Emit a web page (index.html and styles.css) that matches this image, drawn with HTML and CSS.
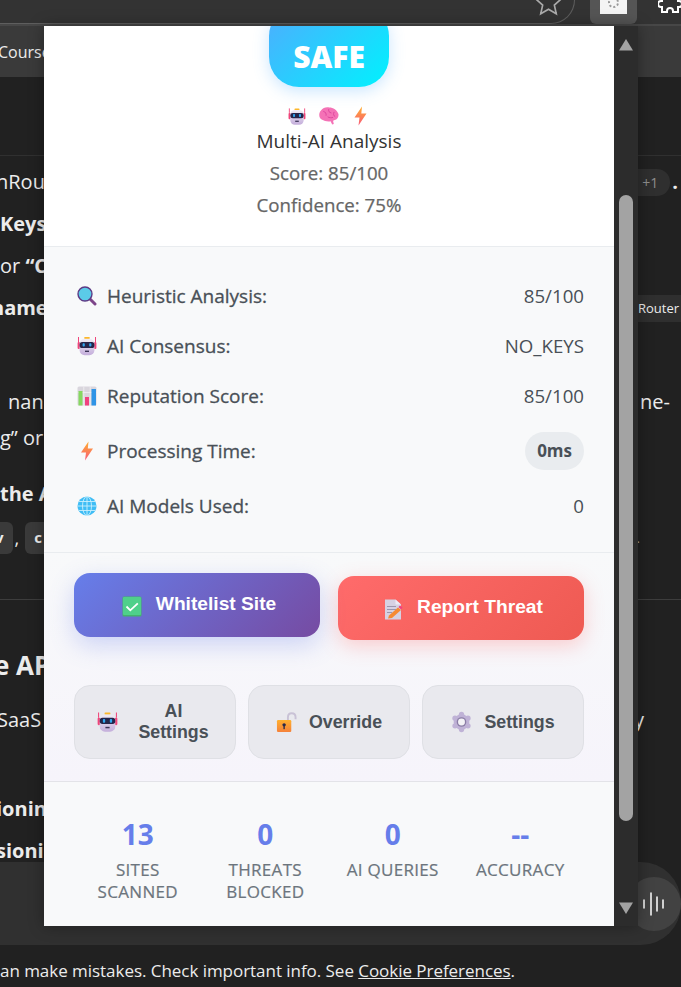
FILE: index.html
```html
<!DOCTYPE html>
<html lang="en">
<head>
    <meta charset="UTF-8">
    <meta name="viewport" content="width=device-width, initial-scale=1.0">
    <title>Multi-AI Analysis</title>
    <link rel="stylesheet" href="styles.css">
</head>
<body>
    <!-- shared icons -->
    <svg class="sprite" xmlns="http://www.w3.org/2000/svg">
        <defs>
            <linearGradient id="boltFill" x1="0" y1="0" x2="0" y2="1">
                <stop offset="0" stop-color="#ffb02e"/>
                <stop offset="1" stop-color="#f8587a"/>
            </linearGradient>
            <linearGradient id="botFill" x1="0" y1="0" x2="0" y2="1">
                <stop offset="0" stop-color="#f1edf6"/>
                <stop offset="1" stop-color="#c4aedb"/>
            </linearGradient>
            <linearGradient id="lockFill" x1="0" y1="0" x2="0" y2="1">
                <stop offset="0" stop-color="#ffb02e"/>
                <stop offset="1" stop-color="#f5813a"/>
            </linearGradient>
            <symbol id="i-bot" viewBox="0 0 20 20">
                <path d="M1.500 1v5M18.500 1v5" stroke="#f0457a" stroke-width="1"/>
                <rect x="0.600" y="6" width="2.400" height="7" rx="1" fill="#f0457a"/>
                <rect x="17" y="6" width="2.400" height="7" rx="1" fill="#f0457a"/>
                <rect x="7.200" y="1" width="5.600" height="2" rx=".8" fill="#fcb82c"/>
                <rect x="2.600" y="2.800" width="14.800" height="16.400" rx="5" fill="url(#botFill)"/>
                <rect x="2.600" y="6" width="14.800" height="6" rx="2.600" fill="#26254a"/>
                <rect x="5.600" y="7.200" width="2.200" height="3.400" rx=".8" fill="#31a8f0"/>
                <rect x="12.200" y="7.200" width="2.200" height="3.400" rx=".8" fill="#31a8f0"/>
                <rect x="8" y="14.600" width="4" height="1.400" fill="#3b3356"/>
            </symbol>
            <symbol id="i-brain" viewBox="1 1.500 18.500 16.500" preserveAspectRatio="none">
                <path d="M3 4.500C4.500 2.400 7.500 1.400 10.500 2c3.500 0 7.500 2.500 8.500 6 .4 2.500-1 5-3.500 5.500l-1.500.7.700 2.800-1.500.5-1.500-3C9.500 15 6 14.500 3.500 13 1 11.500.2 7.500 3 4.500z" fill="#f472b6"/>
                <path d="M5 5.500c2 .5 3 2 2.500 4M10 3.500c-.5 2 .5 3 2.500 3.500M15 6c-1 2-.5 3.500 1 4.500M9 10.500c1.500 1 3.500 1 5 .5" stroke="#d9409b" stroke-width=".8" fill="none"/>
            </symbol>
            <symbol id="i-bolt" viewBox="3.500 0 13 20">
                <path d="M11.500 0.500 4 11.500h5L8 19.500l8-12h-5.200z" fill="url(#boltFill)"/>
            </symbol>
            <symbol id="i-search" viewBox="0 0 20 20">
                <path d="M12.500 12.500l5.500 5.500" stroke="#7d4589" stroke-width="3" stroke-linecap="round"/>
                <circle cx="8" cy="8" r="7" fill="#5bcbe8" stroke="#5c3a85" stroke-width="1.400"/>
            </symbol>
            <symbol id="i-chart" viewBox="0 0 20 20">
                <rect x=".5" y=".5" width="19" height="19" rx="1.500" fill="#d9d6dd"/>
                <path d="M6.800.5v19M13.200.5v19M.5 6.500h19" stroke="#f1f0f3" stroke-width=".8"/>
                <rect x="1.500" y="5" width="4" height="14.500" fill="#86d861"/>
                <rect x="8" y="11" width="4" height="8.500" fill="#f0417f"/>
                <rect x="14.500" y="3" width="4.500" height="16.500" fill="#2f94e6"/>
            </symbol>
            <symbol id="i-globe" viewBox="0 0 20 20">
                <circle cx="10" cy="10" r="9.500" fill="#3fbdf5"/>
                <g stroke="#c9effd" stroke-width=".9" fill="none">
                    <ellipse cx="10" cy="10" rx="4.500" ry="9.500"/>
                    <path d="M10 .5v19M.5 10h19M2 5.500h16M2 14.500h16"/>
                </g>
            </symbol>
            <symbol id="i-check" viewBox="0 0 20 21">
                <rect x=".5" y=".5" width="19" height="20" rx="1.500" fill="#43b36d"/>
                <rect x="1" y="1" width="18" height="18" rx="1" fill="#4fd08a"/>
                <path d="M4.500 10.500l3.800 3.800 7.500-7" stroke="#fff" stroke-width="1.800" fill="none"/>
            </symbol>
            <symbol id="i-memo" viewBox="0 0 20 20">
                <path d="M2 0h10.500L18 5v15H2z" fill="#d6d1e2"/>
                <path d="M12.500 0v5H18z" fill="#eeeaf4"/>
                <path d="M4 7h9M4 10h9M4 13h5" stroke="#9c96ad" stroke-width="1"/>
                <path d="M5 19l1-3 9-8 3 2.500-9 8z" fill="#f68a32"/>
                <path d="M15.500 7.500l1.500-1.500 2.500 2-1.500 2z" fill="#f0417f"/>
            </symbol>
            <symbol id="i-lock" viewBox="0 0 22 22">
                <path d="M12.500 9V6c0-5.500 8-5.500 8 0v2" stroke="#c9c2d6" stroke-width="2" fill="none"/>
                <rect x="1" y="9" width="15" height="12.500" rx="1.200" fill="url(#lockFill)"/>
                <circle cx="8.500" cy="14" r="1.800" fill="#2a2a4a"/>
                <rect x="7.800" y="14" width="1.400" height="4.500" fill="#2a2a4a"/>
            </symbol>
            <symbol id="i-gear" viewBox="0 0 20 20">
                <g fill="#bfb2d6">
                    <circle cx="10" cy="10" r="7.500"/>
                    <circle cx="10" cy="2.800" r="2.500"/>
                    <circle cx="10" cy="17.200" r="2.500"/>
                    <circle cx="3.800" cy="6.400" r="2.500"/>
                    <circle cx="16.200" cy="6.400" r="2.500"/>
                    <circle cx="3.800" cy="13.600" r="2.500"/>
                    <circle cx="16.200" cy="13.600" r="2.500"/>
                </g>
                <circle cx="10" cy="10" r="4.600" fill="#8b7ea6"/>
                <circle cx="10" cy="10" r="3.300" fill="#f3f2f6"/>
            </symbol>
        </defs>
    </svg>

    <header class="topbar">
        <div class="address">
            <svg class="star" viewBox="0 0 24 24"><path d="M12 1l3.300 7.300 7.700.8-5.800 5.200 1.700 7.700L12 18l-6.900 4 1.700-7.700L1 9.100l7.700-.8z"/></svg>
        </div>
        <div class="ext-tile"><span class="ext-icon"><span class="ext-ring"></span></span></div>
        <svg class="puzzle" viewBox="0 0 24 24"><path d="M9 3a3 3 0 0 1 6 0v1h5v5h1a3 3 0 0 1 0 6h-1v5h-5v-1a3 3 0 0 0-6 0v1H4v-5H3a3 3 0 0 1 0-6h1V4h5z"/></svg>
    </header>
    <nav class="tabs"><span class="tab">Course</span></nav>

    <main class="chat">
        <div class="lines first">
            <div class="line"><span class="cut">nRou</span><span class="right-bit"><span class="chip-more">+1</span>.</span></div>
            <div class="line"><b>Keys</b></div>
            <div class="line"><span>or <b>“C</b></span></div>
            <div class="line"><b class="cut-s">name</b><span class="chip-router">nRouter</span></div>
        </div>
        <div class="lines second">
            <div class="line"><span class="indent">nan</span><span class="tail">ne-</span></div>
            <div class="line">g” or</div>
        </div>
        <div class="lines third">
            <div class="line"><b>the A</b></div>
            <div class="line code-row"><span class="code">v</span><span class="comma">,</span><span class="code">c</span><span class="dot">.</span></div>
        </div>
        <hr class="rule">
        <h2 class="heading">e AP</h2>
        <div class="line saas"><span>SaaS</span><span>y</span></div>
        <div class="lines fourth">
            <div class="line"><b class="cut">ionin</b></div>
            <div class="line"><b class="cut">sionin</b></div>
        </div>
    </main>

    <div class="composer">
        <div class="mic">
            <svg viewBox="0 0 24 24"><path d="M2 8v8M9 1v22M15 5v14M21 8v8"/></svg>
        </div>
    </div>
    <footer class="foot">an make mistakes. Check important info. See <a href="#">Cookie Preferences</a>.</footer>

    <!-- extension popup -->
    <div class="popup">
        <div class="panel">
            <section class="status">
                <div class="badge">SAFE</div>
                <div class="status-icons">
                    <svg class="ico-bot"><use href="#i-bot"/></svg>
                    <svg class="ico-brain"><use href="#i-brain"/></svg>
                    <svg class="ico-bolt"><use href="#i-bolt"/></svg>
                </div>
                <p class="status-title">Multi-AI Analysis</p>
                <p class="status-line">Score: 85/100</p>
                <p class="status-line">Confidence: 75%</p>
            </section>

            <section class="details">
                <div class="row">
                    <span class="row-label"><svg class="ico"><use href="#i-search"/></svg>Heuristic Analysis:</span>
                    <span class="row-value">85/100</span>
                </div>
                <div class="row">
                    <span class="row-label"><svg class="ico"><use href="#i-bot"/></svg>AI Consensus:</span>
                    <span class="row-value">NO_KEYS</span>
                </div>
                <div class="row">
                    <span class="row-label"><svg class="ico"><use href="#i-chart"/></svg>Reputation Score:</span>
                    <span class="row-value">85/100</span>
                </div>
                <div class="row tall">
                    <span class="row-label"><svg class="ico"><use href="#i-bolt"/></svg>Processing Time:</span>
                    <span class="pill">0ms</span>
                </div>
                <div class="row">
                    <span class="row-label"><svg class="ico"><use href="#i-globe"/></svg>AI Models Used:</span>
                    <span class="row-value">0</span>
                </div>
            </section>

            <section class="actions">
                <div class="main-actions">
                    <button class="btn btn-white"><svg class="btn-ico"><use href="#i-check"/></svg>Whitelist Site</button>
                    <button class="btn btn-report"><svg class="btn-ico"><use href="#i-memo"/></svg>Report Threat</button>
                </div>
                <div class="sub-actions">
                    <button class="sub"><svg class="sub-ico"><use href="#i-bot"/></svg><span class="sub-text narrow">AI Settings</span></button>
                    <button class="sub"><svg class="sub-ico"><use href="#i-lock"/></svg><span class="sub-text">Override</span></button>
                    <button class="sub"><svg class="sub-ico"><use href="#i-gear"/></svg><span class="sub-text">Settings</span></button>
                </div>
            </section>

            <section class="stats">
                <div class="stat"><div class="stat-num">13</div><div class="stat-label">Sites Scanned</div></div>
                <div class="stat"><div class="stat-num">0</div><div class="stat-label">Threats Blocked</div></div>
                <div class="stat"><div class="stat-num">0</div><div class="stat-label">AI Queries</div></div>
                <div class="stat"><div class="stat-num">--</div><div class="stat-label">Accuracy</div></div>
            </section>
        </div>
        <div class="scrollbar">
            <svg class="arrow" viewBox="0 0 16 14"><path d="M8 1l7 11.500H1z"/></svg>
            <div class="thumb"></div>
            <svg class="arrow" viewBox="0 0 16 14"><path d="M8 13L1 1.500h14z"/></svg>
        </div>
    </div>
</body>
</html>
```

FILE: styles.css
```css
*{
    box-sizing: border-box;
}
html, body{
    margin: 0;
    height: 987px;
    overflow: hidden;
}
body{
    font-family: "Open Sans", "Noto Sans", sans-serif;
    background-color: #212121;
    color: #ececec;
    display: flex;
    flex-direction: column;
}
p, h2{
    margin: 0;
}
button{
    cursor: pointer;
}
.sprite{
    display: block;
    width: 0;
    height: 0;
}

/* browser chrome behind the popup */
.topbar{
    height: 26px;
    flex: none;
    background-color: #333;
    border-bottom: 2px solid #474747;
    display: flex;
    overflow: hidden;
}
.address{
    width: 575px;
    height: 48px;
    margin-top: -24px;
    border: 1px solid #5e5e5e;
    border-left: 0;
    border-radius: 0 30px 30px 0;
    display: flex;
    justify-content: flex-end;
    align-items: center;
    padding-right: 12px;
    flex: none;
}
.star{
    width: 27px;
    height: 27px;
    margin-top: 4px;
    fill: none;
    stroke: #aaa;
    stroke-width: 1.5;
}
.ext-tile{
    width: 47px;
    height: 24px;
    margin-left: 15px;
    background-color: #555;
    border-radius: 0 0 6px 6px;
    display: flex;
    justify-content: center;
    flex: none;
}
.ext-icon{
    width: 27px;
    height: 14px;
    background-color: #f4f4f4;
    display: flex;
    justify-content: center;
}
.ext-ring{
    width: 11px;
    height: 11px;
    margin-top: -3px;
    border: 2px dotted #999;
    border-radius: 50%;
}
.puzzle{
    width: 24px;
    height: 24px;
    margin: -8px 0 0 21px;
    flex: none;
    fill: none;
    stroke: #fff;
    stroke-width: 2;
}
.tabs{
    height: 51px;
    flex: none;
    background-color: #3a3a3a;
    display: flex;
    align-items: center;
}
.tab{
    font-size: 16px;
    margin-left: -2px;
}

.chat{
    height: 785px;
    flex: none;
    overflow: hidden;
    font-size: 20px;
}
.lines{
    line-height: 42px;
}
.first{
    margin-top: 78px;
    padding-top: 5px;
    border-top: 1px solid #303030;
}
.second{
    margin-top: 55px;
}
.second .line{
    height: 36px;
    line-height: 36px;
}
.third{
    margin-top: 16px;
}
.third .line{
    height: 44px;
    line-height: 44px;
}
.fourth{
    margin-top: 48px;
}
.line{
    display: flex;
    justify-content: space-between;
    align-items: center;
    height: 42px;
    white-space: pre-wrap;
}
.line b{
    font-weight: 700;
}
.cut{
    margin-left: -4px;
}
.cut-s{
    margin-left: -9px;
}
.indent{
    margin-left: 8px;
}
.tail{
    padding-right: 11px;
}
.right-bit{
    display: flex;
    align-items: center;
    gap: 2px;
    padding-right: 3px;
    font-weight: 700;
}
.chip-more{
    width: 33px;
    height: 27px;
    line-height: 27px;
    font-size: 14px;
    font-weight: 400;
    color: #8e8e8e;
    background-color: #2f2f2f;
    border-radius: 0 13px 13px 0;
    padding-left: 5px;
}
.chip-router{
    font-size: 13px;
    line-height: 27px;
    background-color: #2f2f2f;
    padding: 0 2px 0 0;
    margin-left: auto;
}
.code-row{
    justify-content: flex-start;
}
.code{
    height: 32px;
    line-height: 30px;
    background-color: #3a3a3a;
    border-radius: 6px;
    font-size: 15px;
    font-weight: 700;
    padding: 0 9px;
}
.code:first-child{
    margin-left: -14px;
}
.comma{
    margin: 0 6px 0 2px;
    font-size: 18px;
}
.dot{
    margin-left: auto;
    margin-right: 41px;
    font-size: 13px;
    color: #aaa;
}
.rule{
    margin: 39px 0 0;
    border: 0;
    height: 1px;
    background-color: #3d3d3d;
}
.heading{
    margin-top: 44px;
    font-size: 26px;
    line-height: 42px;
    font-weight: 700;
    margin-left: -6px;
}
.saas{
    margin: 12px 0 0 -3px;
    padding-right: 37px;
}
.composer{
    height: 83px;
    flex: none;
    background-color: #303030;
    border-radius: 0 40px 40px 0;
    display: flex;
    justify-content: flex-end;
    align-items: center;
}
.mic{
    width: 54px;
    height: 54px;
    margin-right: 0;
    border-radius: 50%;
    background-color: #424242;
    display: flex;
    justify-content: center;
    align-items: center;
}
.mic svg{
    width: 24px;
    height: 24px;
    fill: none;
    stroke: #fff;
    stroke-width: 1.5;
    stroke-linecap: round;
}
.foot{
    height: 52px;
    line-height: 52px;
    font-size: 17px;
    letter-spacing: -.04px;
    white-space: nowrap;
    color: #ececec;
}
.foot a{
    color: inherit;
}

/* popup */
.popup{
    position: absolute;
    left: 44px;
    top: 26px;
    width: 594px;
    height: 900px;
    display: flex;
    box-shadow: 0 0 14px rgba(0, 0, 0, .35);
}
.panel{
    width: 570px;
    height: 900px;
    overflow: hidden;
    background-color: #fff;
}
.scrollbar{
    width: 24px;
    background-color: #2c2c2c;
    display: flex;
    flex-direction: column;
    align-items: center;
    padding-top: 12px;
}
.arrow{
    width: 16px;
    height: 14px;
    fill: #a3a3a3;
    flex: none;
}
.thumb{
    width: 14px;
    height: 626px;
    margin: 143px 0 80px;
    background-color: #a3a3a3;
    border-radius: 7px;
    flex: none;
}

.status{
    display: flow-root;
    height: 221px;
    text-align: center;
    border-bottom: 1px solid #e9ecef;
    background-color: #fff;
}
.badge{
    width: 120px;
    height: 81px;
    margin: -20px auto 0;
    padding-top: 20px;
    line-height: 61px;
    border-radius: 30px;
    font-size: 30px;
    font-weight: 800;
    color: #fff;
    background: linear-gradient(135deg, #4facfe 0%, #00f2fe 100%);
    box-shadow: 0 4px 16px rgba(79, 172, 254, .3);
}
.status-icons{
    display: flex;
    justify-content: center;
    align-items: center;
    height: 22px;
    margin-top: 18px;
}
.ico-bot{
    width: 18px;
    height: 19px;
    margin-right: 13px;
}
.ico-brain{
    width: 20px;
    height: 18px;
    margin-right: 15px;
}
.ico-bolt{
    width: 13px;
    height: 20px;
    margin-right: 4px;
}
.status-title{
    font-size: 19px;
    line-height: 32px;
    color: #333;
    margin-top: -2px;
}
.status-line{
    font-size: 18.7px;
    -webkit-text-stroke: .25px #666;
    line-height: 32px;
    color: #666;
}

.details{
    height: 306px;
    padding: 24px 30px 0 33px;
    background-color: #f8f9fa;
    border-bottom: 1px solid #e9ecef;
}
.row{
    height: 50px;
    display: flex;
    justify-content: space-between;
    align-items: center;
    font-size: 18.7px;
}
.row.tall{
    height: 60px;
}
.row-label{
    display: flex;
    align-items: center;
    font-size: 19px;
    -webkit-text-stroke: .3px #495057;
    color: #495057;
}
.ico{
    width: 20px;
    height: 20px;
    margin-right: 10px;
    flex: none;
}
.row-value{
    padding-bottom: 2px;
    color: #495057;
}
.pill{
    height: 38px;
    line-height: 38px;
    padding: 0 12px;
    border-radius: 19px;
    background-color: #e9ecef;
    font-size: 17px;
    font-weight: 700;
    color: #495057;
}

.actions{
    height: 229px;
    padding: 23px 30px 0;
    background: linear-gradient(180deg, #f8f9fa 0%, #f6f4fb 100%);
    border-bottom: 1px solid #e3e3e8;
}
.main-actions{
    display: flex;
    gap: 18px;
}
.btn{
    flex: 1;
    height: 64px;
    padding: 0 0 2px 4px;
    border: 0;
    border-radius: 16px;
    display: flex;
    justify-content: center;
    align-items: center;
    font-family: "Liberation Sans", Arial, sans-serif;
    font-size: 19.2px;
    font-weight: 700;
    color: #fff;
}
.btn-white{
    background: linear-gradient(135deg, #667eea 0%, #764ba2 100%);
    box-shadow: 0 8px 25px rgba(102, 126, 234, .3);
    transform: translateY(-3px);
}
.btn-report{
    background: linear-gradient(135deg, #ff6b6b 0%, #ee5a52 100%);
    box-shadow: 0 6px 20px rgba(255, 107, 107, .3);
}
.btn-ico{
    width: 20px;
    height: 21px;
    margin: 4px 14px 0 0;
    flex: none;
}
.sub-actions{
    display: flex;
    gap: 12px;
    margin-top: 45px;
}
.sub{
    flex: 1;
    height: 74px;
    padding: 0;
    border: 1px solid #dfe0e5;
    border-radius: 16px;
    background-color: #e9e9ee;
    display: flex;
    justify-content: center;
    align-items: center;
    font-family: "Liberation Sans", Arial, sans-serif;
    font-size: 17.8px;
    font-weight: 700;
    line-height: 21px;
    color: #495057;
}
.sub-ico{
    width: 21px;
    height: 22px;
    margin-right: 12px;
    flex: none;
}
.sub-text.narrow{
    width: 80px;
    margin-left: 4px;
}

.stats{
    height: 144px;
    padding: 35px 30px 0;
    background-color: #f8f9fa;
    display: grid;
    grid-template-columns: repeat(4, 1fr);
}
.stat{
    text-align: center;
}
.stat-num{
    font-size: 28px;
    line-height: 34px;
    font-weight: 700;
    color: #667eea;
}
.stat-label{
    margin: 8px -6px 0;
    font-size: 17px;
    line-height: 22px;
    letter-spacing: .3px;
    -webkit-text-stroke: .2px #6c757d;
    color: #6c757d;
    text-transform: uppercase;
    padding: 0 14px;
}
```
